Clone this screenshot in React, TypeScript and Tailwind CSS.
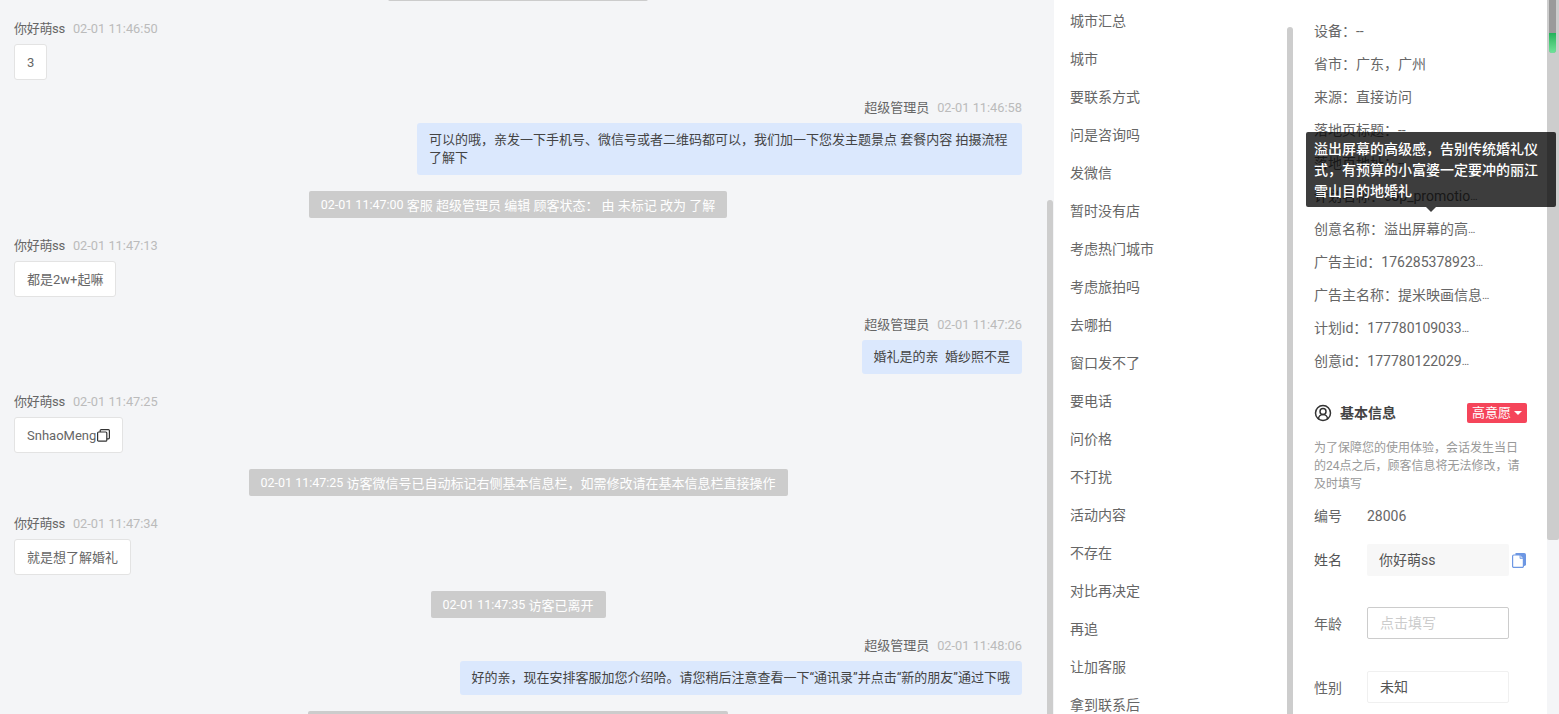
import { CircleUserRound } from "lucide-react";

const font = "font-['Roboto','Noto_Sans_CJK_SC',sans-serif]";

function Name({ name, time, right }: { name: string; time: string; right?: boolean }) {
  return (
    <div className={`flex h-[22px] items-center gap-2 pt-[2px] text-[13px] leading-[20px] ${right ? "justify-end" : ""}`}>
      <span className={right ? "text-[#666]" : "tracking-[-0.3px] text-[#666]"}>{name}</span>
      <span className="text-[12.8px] text-[#bbb]">{time}</span>
    </div>
  );
}

function Visitor({ time, children }: { time: string; children: React.ReactNode }) {
  return (
    <div className="mt-4 flex flex-col items-start">
      <Name name="你好萌ss" time={time} />
      <div className="mt-[5px] flex h-9 items-center rounded-[3px] border border-[#e3e3e3] bg-white px-3 pt-px text-[13px] text-[#666]">
        {children}
      </div>
    </div>
  );
}

function Agent({ time, children }: { time: string; children: React.ReactNode }) {
  return (
    <div className="mt-4 flex flex-col items-end">
      <Name name="超级管理员" time={time} right />
      <div className="mt-[5px] max-w-[605px] rounded-[3px] bg-[#dbe8fd] px-3 py-2 text-[13px] leading-[18px] text-[#444]">
        {children}
      </div>
    </div>
  );
}

function System({ time, children, className = "w-auto" }: { time?: string; children?: React.ReactNode; className?: string }) {
  return (
    <div className="mt-4 flex justify-center">
      <div className={`flex h-[27px] items-center whitespace-pre rounded-[2px] bg-[#cccccc] px-3 pt-[2px] text-[13px] text-white ${className}`}>
        {time && <span className="text-[12.5px]">{time} </span>}
        {children}
      </div>
    </div>
  );
}

const tags = [
  "城市汇总", "城市", "要联系方式", "问是咨询吗", "发微信", "暂时没有店", "考虑热门城市", "考虑旅拍吗", "去哪拍",
  "窗口发不了", "要电话", "问价格", "不打扰", "活动内容", "不存在", "对比再决定", "再追", "让加客服", "拿到联系后",
];

const details: [string, boolean][] = [
  ["设备：--", false], ["省市：广东，广州", false], ["来源：直接访问", false], ["落地页标题：--", false], ["落地页地址：--", false],
  ["计划名称：cop_promotio", true], ["创意名称：溢出屏幕的高", true], ["广告主id：176285378923", true],
  ["广告主名称：提米映画信息", true], ["计划id：177780109033", true], ["创意id：177780122029", true],
];

function Field({ label, className, top, children }: { label: string; className: string; top: string; children: React.ReactNode }) {
  return (
    <div className={`flex items-center ${top}`}>
      <span className="w-[53px] translate-y-px text-[14px] text-[#666]">{label}</span>
      <div className={`flex h-8 w-[142px] items-center rounded-[2px] px-3 text-[14px] ${className}`}>{children}</div>
    </div>
  );
}

export default function App() {
  return (
    <div className={`flex h-[714px] w-[1559px] overflow-hidden bg-[#f4f5f7] ${font}`}>
      {/* Chat */}
      <div className="flex h-full w-[1054px] shrink-0">
        <div className="h-full w-[1047px] overflow-hidden pl-[14px] pr-[25px]">
          <div className="mt-[-26px] flex justify-center">
            <div className="h-[27px] w-[260px] rounded-[2px] bg-[#cccccc]" />
          </div>
          <Visitor time="02-01 11:46:50">3</Visitor>
          <Agent time="02-01 11:46:58">
            可以的哦，亲发一下手机号、微信号或者二维码都可以，我们加一下您发主题景点 套餐内容 拍摄流程了解下
          </Agent>
          <System time="02-01 11:47:00">客服 超级管理员 编辑 顾客状态： 由 未标记 改为 了解</System>
          <Visitor time="02-01 11:47:13">都是2w+起嘛</Visitor>
          <Agent time="02-01 11:47:26">婚礼是的亲&nbsp;&nbsp;婚纱照不是</Agent>
          <Visitor time="02-01 11:47:25">
            SnhaoMeng
            <svg width="13" height="13" viewBox="0 0 13 13" fill="none" stroke="#333" strokeWidth="1.2" className="ml-px">
              <rect x="0.6" y="3" width="9.2" height="9.2" rx="1" />
              <path d="M3.2 3V1.6a1 1 0 0 1 1-1h7.2a1 1 0 0 1 1 1v7.2a1 1 0 0 1-1 1H9.8" />
            </svg>
          </Visitor>
          <System time="02-01 11:47:25">访客微信号已自动标记右侧基本信息栏，如需修改请在基本信息栏直接操作</System>
          <Visitor time="02-01 11:47:34">就是想了解婚礼</Visitor>
          <System time="02-01 11:47:35">访客已离开</System>
          <Agent time="02-01 11:48:06">好的亲，现在安排客服加您介绍哈。请您稍后注意查看一下“通讯录”并点击“新的朋友”通过下哦</Agent>
          <System className="w-[420px]" />
        </div>
        <div className="flex h-full w-[7px] flex-col justify-end">
          <div className="h-[514px] w-[6px] rounded-t-[3px] bg-[#cdcdcd]" />
        </div>
      </div>

      {/* Tags */}
      <div className="h-full w-[233px] shrink-0 overflow-hidden bg-white pl-4">
        <div className="mt-[2px]">
          {tags.map((t) => (
            <div key={t} className="flex h-[38px] items-center text-[14px] text-[#666]">{t}</div>
          ))}
        </div>
      </div>
      <div className="flex h-full w-[7px] shrink-0 flex-col justify-end bg-white">
        <div className="h-[687px] w-[6px] rounded-t-[3px] bg-[#cdcdcd]" />
      </div>

      {/* Details */}
      <div className="relative h-full w-[253px] shrink-0 bg-white pl-5 pr-[19px]">
        <div className="mt-[15px]">
          {details.map(([d, cut]) => (
            <div key={d} className="flex h-[33px] items-center whitespace-nowrap text-[14px] text-[#666]">
              {d}
              {cut && <span className="text-[11px] leading-none">…</span>}
            </div>
          ))}
        </div>
        <div className="mt-[24px] flex items-center justify-between">
          <div className="flex items-center gap-[8px]">
            <CircleUserRound size={18} strokeWidth={2} className="text-[#333]" />
            <span className="translate-y-px text-[14px] font-bold text-[#444]">基本信息</span>
          </div>
          <div className="mr-px flex h-5 w-[60px] items-center justify-center gap-[3px] rounded-[2px] bg-[#f5455a] text-[13px] text-white">
            高意愿
            <span className="h-0 w-0 border-x-4 border-t-4 border-x-transparent border-t-white" />
          </div>
        </div>
        <p className="mt-4 w-[212px] text-[12px] leading-[18px] text-[#999]">
          为了保障您的使用体验，会话发生当日的24点之后，顾客信息将无法修改，请及时填写
        </p>
        <div className="mt-[11px] flex h-6 items-center text-[14px] text-[#666]">
          <span className="w-[53px]">编号</span>
          <span>28006</span>
        </div>
        <div className="mt-4 flex items-center">
          <span className="w-[53px] text-[14px] text-[#555]">姓名</span>
          <div className="flex h-8 w-[142px] items-center rounded-[2px] bg-[#f7f7f7] px-3 text-[14px] text-[#555]">你好萌ss</div>
          <svg width="14" height="15" viewBox="0 0 14 15" className="ml-[3px]" fill="none">
            <path d="M3.5 0h8.7A1.8 1.8 0 0 1 14 1.8v9.4a1.8 1.8 0 0 1-1.8 1.8H3.5z" fill="#6d97e3" />
            <path d="M1.8 2h6.4l3.2 3.2v8a1.2 1.2 0 0 1-1.2 1.2H1.8a1.2 1.2 0 0 1-1.2-1.2V3.2A1.2 1.2 0 0 1 1.8 2z" fill="#fff" stroke="#6d97e3" strokeWidth="1.2" />
            <path d="M8 2v3.4h3.4" fill="#cfdcf6" stroke="#6d97e3" strokeWidth="0.8" />
          </svg>
        </div>
        <Field label="年龄" top="mt-[31px]" className="border border-[#ccc] bg-white text-[#ccc]">点击填写</Field>
        <Field label="性别" top="mt-8" className="border border-[#f0f0f0] bg-white text-[#555]">未知</Field>

        <div className="absolute left-[12px] top-[132px] z-10 w-[250px] rounded-[2px] bg-[rgba(0,0,0,0.76)] px-2 pb-[5px] pt-[7px] text-[14px] font-medium leading-[21px] text-white">
          溢出屏幕的高级感，告别传统婚礼仪式，有预算的小富婆一定要冲的丽江雪山目的地婚礼
          <span className="absolute left-[120px] top-full h-0 w-0 border-x-[5px] border-t-[5px] border-x-transparent border-t-[rgba(0,0,0,0.76)]" />
        </div>
      </div>

      {/* Right scrollbar */}
      <div className="relative h-[540px] w-[12px] shrink-0 rounded-b-[2px] bg-[#cdcdcd]">
        <div className="h-[53px] w-[7px] translate-x-[2px] overflow-hidden rounded-b-[3px] bg-[#9a9a9a]">
          <div className="mt-[33px] h-[20px] bg-gradient-to-b from-[#1fb25a] to-[#6fe39a]" />
        </div>
      </div>
    </div>
  );
}
